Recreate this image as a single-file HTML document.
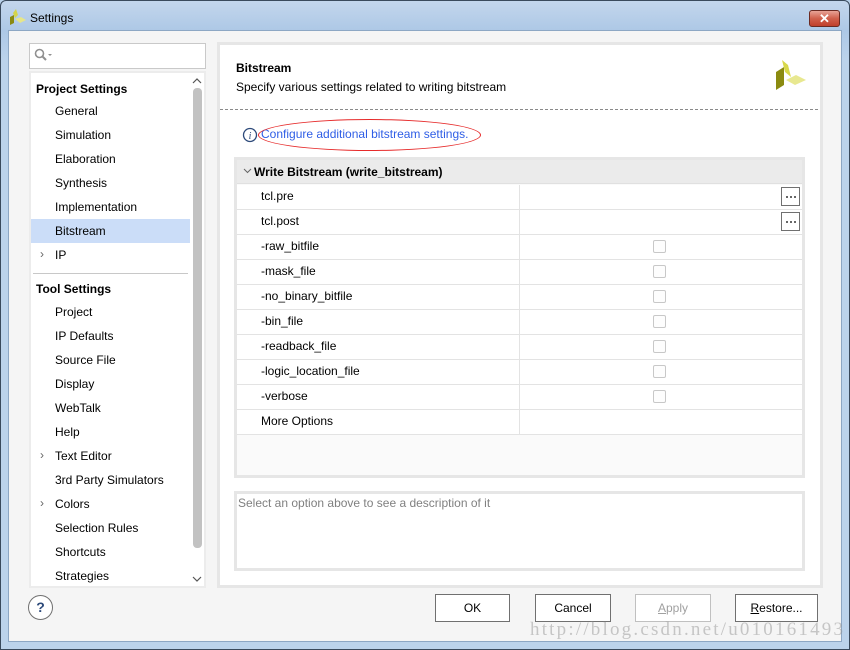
<!DOCTYPE html>
<html><head><meta charset="utf-8"><style>
*{margin:0;padding:0;box-sizing:border-box}
body{width:850px;height:650px;overflow:hidden;font-family:"Liberation Sans",Arial,sans-serif;font-size:12px;color:#000;background:#b9d1ea;position:relative}
.a{position:absolute}
.win{left:0;top:0;width:850px;height:650px;border:1px solid #3a4a5c;border-radius:6px 6px 0 0;background:linear-gradient(#c3d6ec,#adc8e6 30px,#bcd3eb 60px,#bcd3eb)}
.client{left:8px;top:30px;width:834px;height:612px;background:#f5f5f5;border:1px solid #8da7c4}
.ti{left:30px;top:11px;font-size:12px}
.tree div.i{position:absolute;left:24px}
.row{position:absolute;left:237px;width:565px;height:25px;background:#fff;border-bottom:1px solid #e3e3e3}
.row span{position:absolute;left:24px;top:4px}
.row .d{position:absolute;left:282px;top:0;width:1px;height:25px;background:#e3e3e3}
.cb{position:absolute;left:416px;top:5px;width:13px;height:13px;border:1px solid #c8c8c8;border-radius:2px;background:#fdfdfd}
.dots{position:absolute;right:2px;top:2px;width:19px;height:19px;border:1px solid #707070;background:#fff}
.dots i{position:absolute;top:8px;width:2px;height:2px;background:#666}
.btn{position:absolute;top:594px;height:28px;border:1px solid #707070;background:#fff;text-align:center;line-height:26px;font-size:12px}
</style></head><body>
<div class="a win"></div>
<svg class="a" style="left:9px;top:9px" width="18" height="16"><polygon points="4,4 7,0 9,6 6,9" fill="#d4d44a"/><polygon points="1,8 5,6 5,14 1,16" fill="#8a8a10"/><polygon points="6,10 12,8 17,11 11,14" fill="#e6e68a"/></svg>
<div class="a ti">Settings</div>
<div class="a" style="left:809px;top:10px;width:31px;height:17px;border:1px solid #6b2a22;border-radius:3px;background:linear-gradient(#e8a497,#d0604c 50%,#c0402c);color:#fff;font-weight:bold;font-size:13px;text-align:center;line-height:15px">✕</div>
<div class="a client"></div>

<div class="a" style="left:29px;top:43px;width:177px;height:26px;background:#fff;border:1px solid #c9c9c9"></div>
<svg class="a" style="left:34px;top:48px" width="20" height="14"><circle cx="5.5" cy="5.5" r="4" fill="none" stroke="#909090" stroke-width="1.6"/><line x1="8.5" y1="8.5" x2="12" y2="12" stroke="#909090" stroke-width="2"/><polygon points="14,6 18,6 16,8" fill="#909090"/></svg>

<div class="a tree" style="left:29px;top:71px;width:177px;height:517px;background:#fff;border:2px solid #ececec">
<div class="a" style="left:5px;top:9px;font-weight:bold">Project Settings</div>
<div class="i" style="top:31px">General</div>
<div class="i" style="top:55px">Simulation</div>
<div class="i" style="top:79px">Elaboration</div>
<div class="i" style="top:103px">Synthesis</div>
<div class="i" style="top:127px">Implementation</div>
<div class="a" style="left:0;top:146px;width:159px;height:24px;background:#cbddf8"></div>
<div class="i" style="top:151px">Bitstream</div>
<div class="a" style="left:9px;top:174px;color:#666">›</div>
<div class="i" style="top:175px">IP</div>
<div class="a" style="left:2px;top:200px;width:155px;height:1px;background:#c8c8c8"></div>
<div class="a" style="left:5px;top:209px;font-weight:bold">Tool Settings</div>
<div class="i" style="top:232px">Project</div>
<div class="i" style="top:256px">IP Defaults</div>
<div class="i" style="top:280px">Source File</div>
<div class="i" style="top:304px">Display</div>
<div class="i" style="top:328px">WebTalk</div>
<div class="i" style="top:352px">Help</div>
<div class="a" style="left:9px;top:375px;color:#666">›</div>
<div class="i" style="top:376px">Text Editor</div>
<div class="i" style="top:400px">3rd Party Simulators</div>
<div class="a" style="left:9px;top:423px;color:#666">›</div>
<div class="i" style="top:424px">Colors</div>
<div class="i" style="top:448px">Selection Rules</div>
<div class="i" style="top:472px">Shortcuts</div>
<div class="i" style="top:496px">Strategies</div>
<div class="a" style="left:159px;top:0;width:14px;height:513px;background:#fff"></div>
<div class="a" style="left:162px;top:15px;width:9px;height:460px;background:#c2c2c2;border-radius:4px"></div>
<svg class="a" style="left:161px;top:4px" width="10" height="8"><polyline points="1,6 5,2 9,6" fill="none" stroke="#555" stroke-width="1.2"/></svg>
<svg class="a" style="left:161px;top:502px" width="10" height="8"><polyline points="1,2 5,6 9,2" fill="none" stroke="#555" stroke-width="1.2"/></svg>
</div>

<div class="a" style="left:217px;top:42px;width:606px;height:546px;background:#fff;border:3px solid #e6e6e6"></div>
<div class="a" style="left:236px;top:61px;font-weight:bold">Bitstream</div>
<div class="a" style="left:236px;top:80px">Specify various settings related to writing bitstream</div>
<svg class="a" style="left:774px;top:60px" width="32" height="32"><polygon points="2,12 10,7 10,25 2,30" fill="#8b8b10"/><polygon points="8,0 14,5 17,17 11,12" fill="#d8d84a"/><polygon points="12,20 22,15 32,20 21,25" fill="#e8e890"/></svg>
<div class="a" style="left:220px;top:109px;width:598px;border-top:1px dashed #8a8a8a"></div>
<svg class="a" style="left:242px;top:127px" width="16" height="16"><circle cx="8" cy="8" r="6.5" fill="#fff" stroke="#2d4a7a" stroke-width="1.3"/><text x="8" y="12" font-size="10" font-family="Liberation Serif" font-style="italic" text-anchor="middle" fill="#2d4a7a">i</text></svg>
<div class="a" style="left:261px;top:127px;color:#2f5ee6">Configure additional bitstream settings.</div>
<div class="a" style="left:258px;top:119px;width:223px;height:32px;border:1px solid #e62a2a;border-radius:50%"></div>

<div class="a" style="left:234px;top:157px;width:571px;height:321px;background:#fafafa;border:3px solid #e6e6e6"></div>
<div class="a" style="left:237px;top:160px;width:565px;height:24px;background:#ebebeb;border-bottom:1px solid #e0e0e0"></div>
<svg class="a" style="left:243px;top:168px" width="9" height="6"><polyline points="1,1 4.5,4.5 8,1" fill="none" stroke="#666" stroke-width="1"/></svg>
<div class="a" style="left:254px;top:165px;font-weight:bold">Write Bitstream (write_bitstream)</div>
<div class="row" style="top:185px"><span>tcl.pre</span><i class="d"></i><div class="dots"><i style="left:4px"></i><i style="left:8px"></i><i style="left:12px"></i></div></div>
<div class="row" style="top:210px"><span>tcl.post</span><i class="d"></i><div class="dots"><i style="left:4px"></i><i style="left:8px"></i><i style="left:12px"></i></div></div>
<div class="row" style="top:235px"><span>-raw_bitfile</span><i class="d"></i><i class="cb"></i></div>
<div class="row" style="top:260px"><span>-mask_file</span><i class="d"></i><i class="cb"></i></div>
<div class="row" style="top:285px"><span>-no_binary_bitfile</span><i class="d"></i><i class="cb"></i></div>
<div class="row" style="top:310px"><span>-bin_file</span><i class="d"></i><i class="cb"></i></div>
<div class="row" style="top:335px"><span>-readback_file</span><i class="d"></i><i class="cb"></i></div>
<div class="row" style="top:360px"><span>-logic_location_file</span><i class="d"></i><i class="cb"></i></div>
<div class="row" style="top:385px"><span>-verbose</span><i class="d"></i><i class="cb"></i></div>
<div class="row" style="top:410px"><span>More Options</span><i class="d"></i></div>

<div class="a" style="left:234px;top:491px;width:571px;height:80px;background:#fff;border:3px solid #e6e6e6"></div>
<div class="a" style="left:238px;top:496px;color:#808080">Select an option above to see a description of it</div>

<div class="a" style="left:28px;top:595px;width:25px;height:25px;border:1px solid #707070;border-radius:50%;background:#fff;text-align:center;line-height:22px;font-weight:bold;color:#2d4a7a;font-size:14px">?</div>
<div class="btn" style="left:435px;width:75px">OK</div>
<div class="btn" style="left:535px;width:76px">Cancel</div>
<div class="btn" style="left:635px;width:76px;color:#a0a0a0;border-color:#c0c0c0"><u>A</u>pply</div>
<div class="btn" style="left:735px;width:83px"><u>R</u>estore...</div>
<div class="a" style="left:530px;top:619px;font-family:'Liberation Serif',serif;font-size:19px;letter-spacing:2.2px;color:rgba(150,150,150,0.5)">http://blog.csdn.net/u010161493</div>
</body></html>
